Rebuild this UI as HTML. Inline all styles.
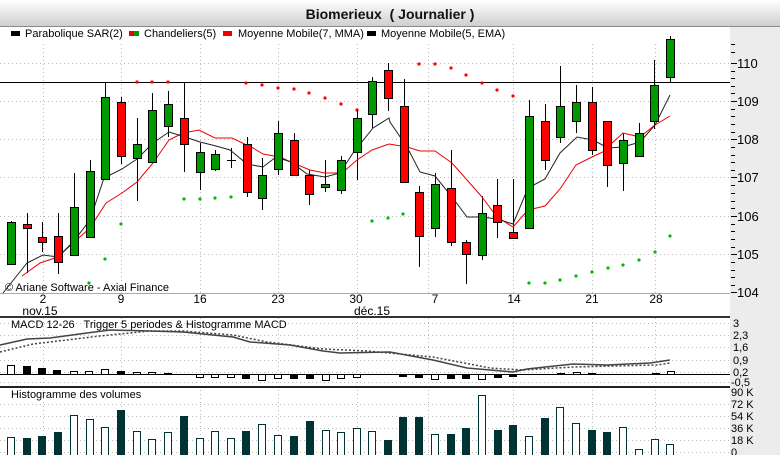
<!DOCTYPE html>
<html><head><meta charset="utf-8"><style>
html,body{margin:0;padding:0;width:780px;height:455px;overflow:hidden;background:#fff}
svg{display:block;font-family:"Liberation Sans",sans-serif}
.pre{white-space:pre}
</style></head><body>
<svg width="780" height="455" viewBox="0 0 780 455" xmlns="http://www.w3.org/2000/svg">
<defs><linearGradient id="tg" x1="0" y1="0" x2="0" y2="1"><stop offset="0" stop-color="#ffffff"/><stop offset="1" stop-color="#cfcfcf"/></linearGradient></defs>
<rect x="0" y="0" width="780" height="26" fill="url(#tg)"/>
<line x1="0" y1="26.5" x2="780" y2="26.5" stroke="#8a8a8a"/>
<text class="pre" x="390" y="19" font-size="14" font-weight="bold" text-anchor="middle" fill="#111">Biomerieux  ( Journalier )</text>
<rect x="730" y="27" width="50" height="428" fill="#ececec"/>
<g font-size="11" fill="#000">
<rect x="11" y="31" width="9" height="5" fill="#000"/><text x="25" y="37">Parabolique SAR(2)</text>
<rect x="129" y="31" width="5" height="5" fill="#e00"/><rect x="134" y="31" width="5" height="5" fill="#090"/><text x="144" y="37">Chandeliers(5)</text>
<rect x="223" y="31" width="9" height="5" fill="#e00"/><text x="238" y="37">Moyenne Mobile(7, MMA)</text>
<rect x="367" y="31" width="9" height="5" fill="#000"/><text x="381" y="37">Moyenne Mobile(5, EMA)</text>
</g>
<g stroke="#bbb" stroke-dasharray="1,3">
<path d="M0 63.5H730M0 101.5H730M0 139.5H730M0 177.5H730M0 216.5H730M0 254.5H730"/>
<path d="M43.5 44V293M121.5 44V293M200.5 44V293M278.5 44V293M357.5 44V293M428.5 44V293M513.5 44V293M592.5 44V293M655.5 44V293"/>
<path d="M0 323.5H730M0 335.5H730M0 347.5H730M0 360.5H730M0 372.5H730M0 382.5H730"/>
<path d="M0 404.5H730M0 416.5H730M0 428.5H730M0 440.5H730M0 452.5H730"/>
<path d="M43.5 318V455M121.5 318V455M200.5 318V455M278.5 318V455M357.5 318V455M428.5 318V455M513.5 318V455M592.5 318V455M655.5 318V455"/>
</g>
<line x1="0" y1="82.5" x2="730" y2="82.5" stroke="#000"/>
<line x1="0" y1="293.5" x2="730" y2="293.5" stroke="#aaa"/>
<g stroke="#000"><path d="M731 44.5h4M731 52.5h4M731 63.5h6M731 71.5h4M731 78.5h4M731 86.5h4M731 93.5h4M731 101.5h6M731 109.5h4M731 116.5h4M731 124.5h4M731 132.5h4M731 139.5h6M731 147.5h4M731 155.5h4M731 162.5h4M731 170.5h4M731 177.5h6M731 185.5h4M731 193.5h4M731 201.5h4M731 208.5h4M731 216.5h6M731 224.5h4M731 231.5h4M731 239.5h4M731 247.5h4M731 254.5h6M731 262.5h4M731 270.5h4M731 277.5h4M731 285.5h4M731 292.5h6"/></g>
<g font-size="13" fill="#000"><text x="737" y="68">110</text><text x="737" y="106">109</text><text x="737" y="144">108</text><text x="737" y="182">107</text><text x="737" y="221">106</text><text x="737" y="259">105</text><text x="737" y="297">104</text></g>
<g font-size="12" fill="#000" text-anchor="middle"><text x="43" y="303">2</text><text x="121" y="303">9</text><text x="200" y="303">16</text><text x="278" y="303">23</text><text x="356" y="303">30</text><text x="435" y="303">7</text><text x="514" y="303">14</text><text x="592" y="303">21</text><text x="656" y="303">28</text><text x="40" y="315">nov.15</text><text x="372" y="315">déc.15</text></g>
<text x="5" y="291" font-size="11" fill="#000">© Ariane Software - Axial Finance</text>
<g fill="#f00"><circle cx="137" cy="82" r="1.6"/><circle cx="152" cy="82" r="1.6"/><circle cx="168" cy="82" r="1.6"/><circle cx="246" cy="83" r="1.6"/><circle cx="262" cy="85" r="1.6"/><circle cx="278" cy="88" r="1.6"/><circle cx="294" cy="89" r="1.6"/><circle cx="309" cy="93" r="1.6"/><circle cx="325" cy="98" r="1.6"/><circle cx="341" cy="104" r="1.6"/><circle cx="357" cy="110" r="1.6"/><circle cx="419" cy="64" r="1.6"/><circle cx="435" cy="64" r="1.6"/><circle cx="451" cy="68" r="1.6"/><circle cx="466" cy="75" r="1.6"/><circle cx="482" cy="83" r="1.6"/><circle cx="497" cy="90" r="1.6"/><circle cx="513" cy="96" r="1.6"/></g>
<g fill="#0b0"><circle cx="89" cy="283" r="1.6"/><circle cx="105" cy="259" r="1.6"/><circle cx="121" cy="224" r="1.6"/><circle cx="184" cy="199" r="1.6"/><circle cx="200" cy="199" r="1.6"/><circle cx="215" cy="198" r="1.6"/><circle cx="231" cy="197" r="1.6"/><circle cx="372" cy="221" r="1.6"/><circle cx="388" cy="218" r="1.6"/><circle cx="403" cy="214" r="1.6"/><circle cx="529" cy="283" r="1.6"/><circle cx="545" cy="283" r="1.6"/><circle cx="560" cy="280" r="1.6"/><circle cx="576" cy="276" r="1.6"/><circle cx="592" cy="272" r="1.6"/><circle cx="608" cy="268" r="1.6"/><circle cx="623" cy="265" r="1.6"/><circle cx="639" cy="260" r="1.6"/><circle cx="655" cy="252" r="1.6"/><circle cx="670" cy="236" r="1.6"/></g>
<path stroke="#000" stroke-width="1" fill="none" d="M11.5 221V264M27.5 213V273M42.5 222V252M58.5 213V274M74.5 173V255M90.5 160V237M105.5 83V179M121.5 97V164M137.5 118V201M152.5 93V162M168.5 91V137M184.5 82V172M200.5 143V190M215.5 150V171M231.5 148V168M247.5 137V197M262.5 158V210M278.5 121V175M294.5 133V175M309.5 170V205M325.5 160V192M341.5 156V194M357.5 110V180M372.5 77V128M388.5 63V111M404.5 79V182M419.5 186V267M435.5 173V237M451.5 150V246M466.5 240V284M482.5 196V260M497.5 179V238M513.5 179V238M529.5 100V228M545.5 104V170M560.5 66V143M576.5 85V133M592.5 87V155M607.5 121V187M623.5 133V191M639.5 123V156M654.5 60V129M670.5 36V82M227 160.5h9"/>
<polyline fill="none" stroke="#e00" stroke-width="1" points="22,276 40,263 58,257 73,243 90,228 106,203 122,193 137,182 153,163 169,140 183,133 199,130 215,138 232,138 253,148 263,154 280,157 293,163 310,170 325,173 342,173 357,160 372,150 389,144 407,147 420,151 435,151 452,163 467,180 482,197 497,217 513,227 528,210 545,206 560,189 576,165 592,157 607,150 612,143 623,133 640,137 655,125 670,116"/>
<polyline fill="none" stroke="#222" stroke-width="1" points="3,293 27,263 43,255 58,257 73,242 90,220 104,178 122,169 137,159 153,143 169,132 182,136 200,142 216,146 230,150 247,164 263,167 276,157 291,162 307,174 325,177 340,173 353,153 373,128 389,118 390,122 407,147 420,172 435,176 452,197 467,217 482,217 497,219 513,224 528,188 545,179 560,153 577,137 593,140 608,148 623,147 640,142 655,125 670,95"/>
<g stroke="#000" stroke-width="1">
<g fill="#090"><rect x="7.5" y="222.5" width="8" height="42"/><rect x="70.5" y="207.5" width="8" height="48"/><rect x="86.5" y="171.5" width="8" height="66"/><rect x="101.5" y="97.5" width="8" height="82"/><rect x="133.5" y="144.5" width="8" height="14"/><rect x="148.5" y="110.5" width="8" height="52"/><rect x="164.5" y="104.5" width="8" height="22"/><rect x="196.5" y="152.5" width="8" height="20"/><rect x="211.5" y="154.5" width="8" height="15"/><rect x="258.5" y="175.5" width="8" height="23"/><rect x="274.5" y="133.5" width="8" height="36"/><rect x="321.5" y="184.5" width="8" height="3"/><rect x="337.5" y="160.5" width="8" height="30"/><rect x="353.5" y="118.5" width="8" height="34"/><rect x="368.5" y="81.5" width="8" height="33"/><rect x="431.5" y="184.5" width="8" height="44"/><rect x="478.5" y="213.5" width="8" height="42"/><rect x="525.5" y="116.5" width="8" height="112"/><rect x="556.5" y="106.5" width="8" height="31"/><rect x="572.5" y="102.5" width="8" height="19"/><rect x="619.5" y="140.5" width="8" height="23"/><rect x="635.5" y="133.5" width="8" height="23"/><rect x="650.5" y="85.5" width="8" height="36"/><rect x="666.5" y="39.5" width="8" height="38"/></g>
<g fill="#f00"><rect x="23.5" y="224.5" width="8" height="4"/><rect x="38.5" y="237.5" width="8" height="5"/><rect x="54.5" y="236.5" width="8" height="26"/><rect x="117.5" y="102.5" width="8" height="54"/><rect x="180.5" y="118.5" width="8" height="26"/><rect x="243.5" y="144.5" width="8" height="48"/><rect x="290.5" y="140.5" width="8" height="35"/><rect x="305.5" y="175.5" width="8" height="19"/><rect x="384.5" y="70.5" width="8" height="28"/><rect x="400.5" y="106.5" width="8" height="76"/><rect x="415.5" y="192.5" width="8" height="44"/><rect x="447.5" y="188.5" width="8" height="54"/><rect x="462.5" y="242.5" width="8" height="12"/><rect x="493.5" y="205.5" width="8" height="17"/><rect x="509.5" y="232.5" width="8" height="6"/><rect x="541.5" y="121.5" width="8" height="39"/><rect x="588.5" y="102.5" width="8" height="48"/><rect x="603.5" y="121.5" width="8" height="44"/></g>
</g>
<rect x="0" y="316" width="730" height="2" fill="#333"/>
<text class="pre" x="11" y="328" font-size="11" fill="#000">MACD 12-26   Trigger 5 periodes &amp; Histogramme MACD</text>
<polyline fill="none" stroke="#444" stroke-width="1.5" points="0,352 33,344 100,336 150,331 183,331 233,335 267,342 323,349 367,351 433,357 490,368 523,370 573,367 657,365 670,363" stroke-dasharray="2,2"/>
<polyline fill="none" stroke="#444" stroke-width="1.5" points="0,345 27,339 50,338 87,333 110,330 150,331 183,332 233,337 250,342 290,345 323,351 340,353 390,352 433,360 467,368 513,372 527,369 573,364 607,365 650,363 670,360"/>
<line x1="0" y1="374.5" x2="730" y2="374.5" stroke="#000"/>
<g stroke="#000" stroke-width="1">
<g fill="#fff"><rect x="7.5" y="365.5" width="7" height="9"/><rect x="70.5" y="371.5" width="7" height="3"/><rect x="85.5" y="371.5" width="7" height="3"/><rect x="101.5" y="369.5" width="7" height="5"/><rect x="133.5" y="372.5" width="7" height="2"/><rect x="148.5" y="372.5" width="7" height="2"/><rect x="196.5" y="374.5" width="7" height="3"/><rect x="211.5" y="374.5" width="7" height="3"/><rect x="227.5" y="374.5" width="7" height="3"/><rect x="258.5" y="374.5" width="7" height="6"/><rect x="274.5" y="374.5" width="7" height="4"/><rect x="322.5" y="374.5" width="7" height="6"/><rect x="337.5" y="374.5" width="7" height="4"/><rect x="353.5" y="374.5" width="7" height="3"/><rect x="431.5" y="374.5" width="7" height="5"/><rect x="478.5" y="374.5" width="7" height="5"/><rect x="573.5" y="372.5" width="7" height="2"/><rect x="667.5" y="371.5" width="7" height="3"/></g>
<g fill="#000"><rect x="23.5" y="366.5" width="7" height="8"/><rect x="38.5" y="368.5" width="7" height="6"/><rect x="53.5" y="370.5" width="7" height="4"/><rect x="117.5" y="371.5" width="7" height="3"/><rect x="164.5" y="373.5" width="7" height="1"/><rect x="242.5" y="374.5" width="7" height="4"/><rect x="290.5" y="374.5" width="7" height="4"/><rect x="306.5" y="374.5" width="7" height="4"/><rect x="399.5" y="374.5" width="7" height="2"/><rect x="415.5" y="374.5" width="7" height="3"/><rect x="447.5" y="374.5" width="7" height="4"/><rect x="462.5" y="374.5" width="7" height="4"/><rect x="494.5" y="374.5" width="7" height="3"/><rect x="509.5" y="374.5" width="7" height="2"/><rect x="557.5" y="373.5" width="7" height="1"/><rect x="588.5" y="373.5" width="7" height="1"/><rect x="652.5" y="373.5" width="7" height="1"/></g>
</g>
<g font-size="11" fill="#000"><text x="733" y="327">3</text><text x="733" y="339">2,3</text><text x="733" y="351">1,6</text><text x="733" y="364">0,9</text><text x="733" y="376">0,2</text><text x="731" y="386">-0,5</text></g>
<rect x="0" y="386" width="730" height="2" fill="#222"/>
<text x="11" y="398" font-size="11" fill="#000">Histogramme des volumes</text>
<g stroke="#033" stroke-width="1">
<g fill="#fff"><rect x="7.5" y="437.5" width="7" height="18"/><rect x="70.5" y="415.5" width="7" height="40"/><rect x="86.5" y="419.5" width="7" height="36"/><rect x="101.5" y="427.5" width="7" height="28"/><rect x="133.5" y="431.5" width="7" height="24"/><rect x="148.5" y="439.5" width="7" height="16"/><rect x="164.5" y="432.5" width="7" height="23"/><rect x="196.5" y="438.5" width="7" height="17"/><rect x="211.5" y="431.5" width="7" height="24"/><rect x="227.5" y="438.5" width="7" height="17"/><rect x="258.5" y="424.5" width="7" height="31"/><rect x="274.5" y="435.5" width="7" height="20"/><rect x="322.5" y="430.5" width="7" height="25"/><rect x="337.5" y="432.5" width="7" height="23"/><rect x="353.5" y="428.5" width="7" height="27"/><rect x="368.5" y="431.5" width="7" height="24"/><rect x="431.5" y="434.5" width="7" height="21"/><rect x="478.5" y="395.5" width="7" height="60"/><rect x="525.5" y="436.5" width="7" height="19"/><rect x="556.5" y="407.5" width="7" height="48"/><rect x="572.5" y="423.5" width="7" height="32"/><rect x="619.5" y="427.5" width="7" height="28"/><rect x="635.5" y="449.5" width="7" height="6"/><rect x="651.5" y="439.5" width="7" height="16"/><rect x="666.5" y="444.5" width="7" height="11"/></g>
<g fill="#033"><rect x="23.5" y="438.5" width="7" height="17"/><rect x="38.5" y="436.5" width="7" height="19"/><rect x="54.5" y="432.5" width="7" height="23"/><rect x="117.5" y="410.5" width="7" height="45"/><rect x="180.5" y="416.5" width="7" height="39"/><rect x="242.5" y="431.5" width="7" height="24"/><rect x="290.5" y="436.5" width="7" height="19"/><rect x="306.5" y="421.5" width="7" height="34"/><rect x="384.5" y="440.5" width="7" height="15"/><rect x="399.5" y="417.5" width="7" height="38"/><rect x="415.5" y="417.5" width="7" height="38"/><rect x="447.5" y="434.5" width="7" height="21"/><rect x="462.5" y="428.5" width="7" height="27"/><rect x="494.5" y="430.5" width="7" height="25"/><rect x="509.5" y="425.5" width="7" height="30"/><rect x="541.5" y="418.5" width="7" height="37"/><rect x="588.5" y="430.5" width="7" height="25"/><rect x="603.5" y="432.5" width="7" height="23"/></g>
</g>
<g font-size="11" fill="#000"><text x="731" y="396">90 K</text><text x="731" y="408">72 K</text><text x="731" y="420">54 K</text><text x="731" y="432">36 K</text><text x="731" y="444">18 K</text><text x="731" y="456">0</text></g>
</svg>
</body></html>
